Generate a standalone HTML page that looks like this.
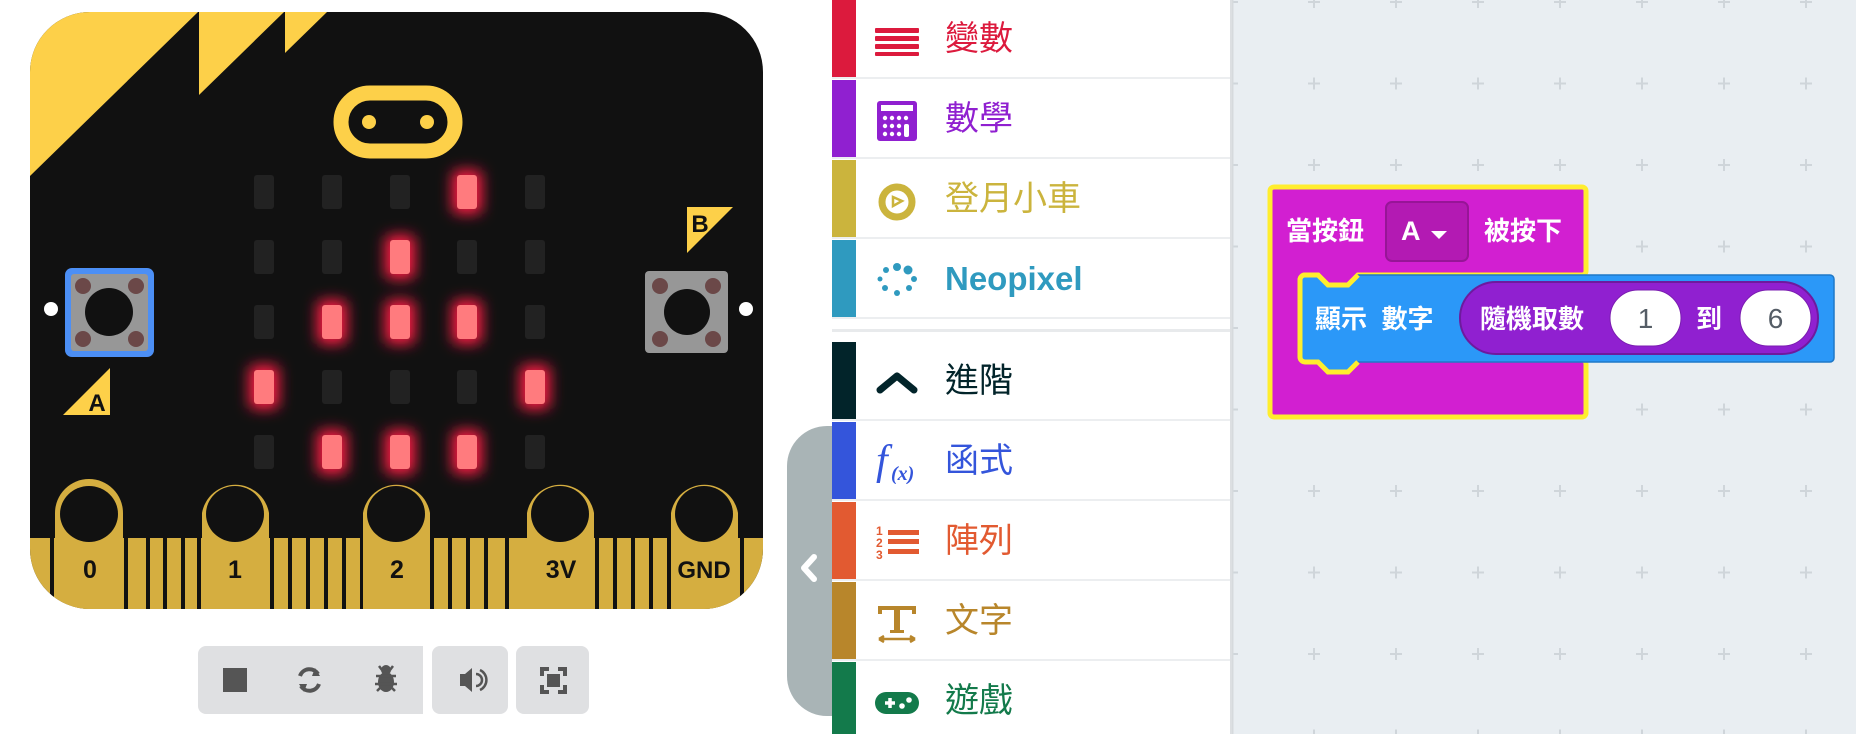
<!DOCTYPE html>
<html><head><meta charset="utf-8"><style>
body{margin:0;width:1856px;height:734px;overflow:hidden;background:#fff;font-family:"Liberation Sans","Noto Sans CJK TC",sans-serif;position:relative}
.abs{position:absolute}
.row{position:absolute;left:832px;width:398px;height:79px;border-bottom:2px solid #eceef0;box-sizing:border-box}
.row .c{position:absolute;left:0;top:0;width:24px;height:100%}
.row .ic{position:absolute;left:43px;top:18px;width:44px;height:44px}
.row .t{position:absolute;left:113px;top:17px;font-size:34px;line-height:44px;font-family:"Liberation Sans","Noto Sans CJK TC",sans-serif}
.bt{color:#fff;font-weight:bold;font-size:26px;font-family:"Liberation Sans","Noto Sans CJK TC",sans-serif;position:absolute;line-height:30px}
.grp{position:absolute;top:646px;height:68px;background:#dfe0e2;border-radius:8px}
</style></head><body>

<svg class="abs" style="left:1232px;top:0" width="624" height="734">
<rect width="624" height="734" fill="#e9eef2"/>
<defs><pattern id="g" x="0" y="0" width="82" height="81.5" patternUnits="userSpaceOnUse" patternTransform="translate(-7,-5)">
<path d="M1 7H13M7 1V13" stroke="#cfd5da" stroke-width="2"/></pattern></defs>
<rect x="0" y="0" width="624" height="734" fill="url(#g)"/>
<line x1="0.5" y1="0" x2="0.5" y2="734" stroke="#d6dadd" stroke-width="2"/>
</svg>

<svg class="abs" style="left:1260px;top:175px" width="590" height="260">
<path d="M14 12 H322 a4 4 0 0 1 4 4 V96 a4 4 0 0 1 -4 4 H98 l-10 10 H68 l-10 -10 H45 a5 5 0 0 0 -5 5 V180 a5 5 0 0 0 5 5 H58 l10 10 H88 l10 -10 H322 a4 4 0 0 1 4 4 V238 a4 4 0 0 1 -4 4 H14 a4 4 0 0 1 -4 -4 V16 a4 4 0 0 1 4 -4Z" fill="#d21fd1" stroke="#ffed2e" stroke-width="5"/>
<rect x="126" y="27" width="82" height="59" rx="6" fill="#b31ab3" stroke="#971597" stroke-width="2"/>
<path d="M171 56 h16 l-8 8z" fill="#fff"/>
<path d="M45 100 H58 l10 10 H88 l10 -10 H570 a4 4 0 0 1 4 4 V183 a4 4 0 0 1 -4 4 H98 l-10 10 H68 l-10 -10 H45 a5 5 0 0 1 -5 -5 V105 a5 5 0 0 1 5 -5Z" fill="#2b98f8" stroke="#1f78c8" stroke-width="1.5"/>
<path d="M45 100 H58 l10 10 H88 l10 -10 M98 187 l-10 10 H68 l-10 -10 H45 a5 5 0 0 1 -5 -5 V105 a5 5 0 0 1 5 -5" fill="none" stroke="#ffed2e" stroke-width="5"/>
<rect x="200" y="107" width="358" height="72" rx="36" fill="#9020d0" stroke="#6e1a9e" stroke-width="2"/>
<rect x="350" y="115" width="71" height="56" rx="28" fill="#fff" stroke="#7a1cb0" stroke-width="1"/>
<rect x="480" y="115" width="71" height="56" rx="28" fill="#fff" stroke="#7a1cb0" stroke-width="1"/>
</svg>
<div class="bt" style="left:1286px;top:216px">當按鈕</div>
<div class="bt" style="left:1401px;top:216px;font-size:27px">A</div>
<div class="bt" style="left:1484px;top:216px">被按下</div>
<div class="bt" style="left:1315px;top:304px">顯示&nbsp;&nbsp;數字</div>
<div class="bt" style="left:1480px;top:304px">隨機取數</div>
<div class="bt" style="left:1696px;top:304px">到</div>
<div class="abs" style="left:1610px;top:304px;width:71px;text-align:center;font-size:28px;color:#555d66;line-height:30px">1</div>
<div class="abs" style="left:1740px;top:304px;width:71px;text-align:center;font-size:28px;color:#555d66;line-height:30px">6</div>

<div class="abs" style="left:832px;top:0;width:398px;height:734px;background:#fff;border-right:2px solid #dcdfe2"></div>
<div class="abs" style="left:832px;top:329px;width:398px;height:3px;background:#e8eaec"></div>

<div class="row" style="top:0"><div class="c" style="background:#dc1a3d"></div>
<svg class="ic" viewBox="0 0 44 44"><g fill="#dc1a3d"><rect x="0" y="10" width="44" height="5" rx="1"/><rect x="0" y="18" width="44" height="5" rx="1"/><rect x="0" y="26" width="44" height="5" rx="1"/><rect x="0" y="34" width="44" height="4" rx="1"/></g></svg>
<div class="t" style="color:#dc1a3d">變數</div></div>

<div class="row" style="top:80px"><div class="c" style="background:#9020d0"></div>
<svg class="ic" viewBox="0 0 44 44"><rect x="2" y="3" width="40" height="40" rx="3" fill="#9020d0"/><rect x="6" y="7" width="32" height="6" fill="#fff"/><g fill="#fff"><circle cx="10" cy="20" r="2.2"/><circle cx="17" cy="20" r="2.2"/><circle cx="24" cy="20" r="2.2"/><circle cx="31" cy="20" r="2.2"/><circle cx="10" cy="28" r="2.2"/><circle cx="17" cy="28" r="2.2"/><circle cx="24" cy="28" r="2.2"/><circle cx="10" cy="36" r="2.2"/><circle cx="17" cy="36" r="2.2"/><circle cx="24" cy="36" r="2.2"/><rect x="29" y="26" width="5" height="13" rx="2"/></g></svg>
<div class="t" style="color:#9020d0">數學</div></div>

<div class="row" style="top:160px"><div class="c" style="background:#cbb43d"></div>
<svg class="ic" viewBox="0 0 44 44"><circle cx="22" cy="24" r="15" fill="none" stroke="#cbb43d" stroke-width="7"/><path d="M18 19 l9 4 -9 5z" fill="none" stroke="#cbb43d" stroke-width="2.5"/></svg>
<div class="t" style="color:#cbb43d">登月小車</div></div>

<div class="row" style="top:240px"><div class="c" style="background:#2f9abf"></div>
<svg class="ic" viewBox="0 0 44 44" fill="#2f9abf"><circle cx="22" cy="9" r="4"/><circle cx="33" cy="12" r="4.5"/><circle cx="39" cy="21" r="3"/><circle cx="34" cy="30" r="3"/><circle cx="22" cy="35" r="3"/><circle cx="10" cy="30" r="3"/><circle cx="5" cy="21" r="2.5"/><circle cx="11" cy="12" r="3"/></svg>
<div class="t" style="color:#2f9abf;font-weight:bold;font-size:33px">Neopixel</div></div>

<div class="row" style="top:342px"><div class="c" style="background:#02242a"></div>
<svg class="ic" viewBox="0 0 44 44"><path d="M5 30 L22 16 L39 30" fill="none" stroke="#02242a" stroke-width="7" stroke-linecap="round" stroke-linejoin="round"/></svg>
<div class="t" style="color:#02242a">進階</div></div>

<div class="row" style="top:422px"><div class="c" style="background:#3455db"></div>
<svg class="ic" viewBox="0 0 44 44"><text x="1" y="34" font-family="Liberation Serif,serif" font-style="italic" font-size="42" fill="#3455db">f</text><text x="16" y="40" font-family="Liberation Serif,serif" font-style="italic" font-weight="bold" font-size="20" fill="#3455db">(x)</text></svg>
<div class="t" style="color:#3455db">函式</div></div>

<div class="row" style="top:502px"><div class="c" style="background:#e25a31"></div>
<svg class="ic" viewBox="0 0 44 44"><g fill="#e25a31"><rect x="13" y="10" width="31" height="5"/><rect x="13" y="19" width="31" height="5"/><rect x="13" y="29" width="31" height="5"/></g><text x="1" y="15" font-size="12" font-weight="bold" fill="#e25a31" font-family="Liberation Sans">1</text><text x="1" y="27" font-size="12" font-weight="bold" fill="#e25a31" font-family="Liberation Sans">2</text><text x="1" y="39" font-size="12" font-weight="bold" fill="#e25a31" font-family="Liberation Sans">3</text></svg>
<div class="t" style="color:#e25a31">陣列</div></div>

<div class="row" style="top:582px"><div class="c" style="background:#b8862b"></div>
<svg class="ic" viewBox="0 0 44 44"><path d="M3 6 H41 V14 H37 V10 H25 V30 H29 V33 H15 V30 H19 V10 H7 V14 H3Z" fill="#b8862b"/><path d="M4 39 H40 M4 39 l5 -3 M4 39 l5 3 M40 39 l-5 -3 M40 39 l-5 3" stroke="#b8862b" stroke-width="2.5" fill="none"/></svg>
<div class="t" style="color:#b8862b">文字</div></div>

<div class="row" style="top:662px;height:72px;border-bottom:0"><div class="c" style="background:#137a4b"></div>
<svg class="ic" viewBox="0 0 44 44"><rect x="0" y="12" width="44" height="22" rx="11" fill="#137a4b"/><path d="M10 23 H20 M15 18 V28" stroke="#fff" stroke-width="3.5"/><circle cx="27" cy="26" r="2.8" fill="#fff"/><circle cx="34" cy="20" r="2.8" fill="#fff"/></svg>
<div class="t" style="color:#137a4b">遊戲</div></div>

<div class="abs" style="left:787px;top:426px;width:45px;height:290px;background:#a9b4b6;border-radius:40px 0 0 40px"></div>
<svg class="abs" style="left:797px;top:553px" width="24" height="30"><path d="M17 4 L7 15 L17 26" stroke="#fff" stroke-width="6" fill="none" stroke-linecap="round" stroke-linejoin="round"/></svg>

<svg class="abs" style="left:0;top:0" width="780" height="734">
<defs>
<clipPath id="bc"><rect x="30" y="12" width="733" height="597" rx="60"/></clipPath>
<filter id="glow" x="-100%" y="-100%" width="300%" height="300%"><feGaussianBlur stdDeviation="7"/></filter>
</defs>
<g clip-path="url(#bc)">
<rect x="30" y="12" width="733" height="597" fill="#111"/>
<path d="M30 12 H198 L30 176Z" fill="#fdd049"/>
<path d="M199 12 H284 L199 95Z" fill="#fdd049"/>
<path d="M285 12 H327 L285 53Z" fill="#fdd049"/>
<rect x="30" y="538" width="733" height="72" fill="#d5ae40"/>
<g fill="#111">
<rect x="50" y="538" width="4" height="72"/><rect x="124" y="538" width="4" height="72"/><rect x="146" y="538" width="4" height="72"/><rect x="163" y="538" width="4" height="72"/><rect x="181" y="538" width="4" height="72"/>
<rect x="197" y="538" width="4" height="72"/><rect x="270" y="538" width="4" height="72"/><rect x="288" y="538" width="4" height="72"/><rect x="306" y="538" width="4" height="72"/><rect x="324" y="538" width="4" height="72"/><rect x="342" y="538" width="4" height="72"/><rect x="360" y="538" width="4" height="72"/>
<rect x="430" y="538" width="4" height="72"/><rect x="448" y="538" width="4" height="72"/><rect x="466" y="538" width="4" height="72"/><rect x="484" y="538" width="4" height="72"/><rect x="505" y="538" width="4" height="72"/>
<rect x="595" y="538" width="4" height="72"/><rect x="613" y="538" width="4" height="72"/><rect x="631" y="538" width="4" height="72"/><rect x="649" y="538" width="4" height="72"/><rect x="667" y="538" width="4" height="72"/><rect x="740" y="538" width="4" height="72"/>
</g>
<g fill="#d5ae40">
<path d="M55 610 V513 a34 34 0 0 1 68 0 V610Z"/>
<path d="M202 610 V513 a34 34 0 0 1 67 0 V610Z"/>
<path d="M363 610 V513 a34 34 0 0 1 67 0 V610Z"/>
<path d="M527 610 V513 a34 34 0 0 1 67 0 V610Z"/>
<path d="M671 610 V513 a34 34 0 0 1 67 0 V610Z"/>
</g>
<g fill="#111">
<ellipse cx="89" cy="514" rx="29" ry="28"/><ellipse cx="235" cy="514" rx="29" ry="28"/><ellipse cx="396" cy="514" rx="29" ry="28"/><ellipse cx="560" cy="514" rx="29" ry="28"/><ellipse cx="704" cy="514" rx="29" ry="28"/>
</g>
<g font-family="Liberation Sans" font-weight="bold" font-size="25" fill="#111" text-anchor="middle">
<text x="90" y="578">0</text><text x="235" y="578">1</text><text x="397" y="578">2</text><text x="561" y="578">3V</text><text x="704" y="578" font-size="24">GND</text>
</g>
</g>
<rect x="341" y="93" width="114" height="58" rx="29" fill="none" stroke="#fdd049" stroke-width="15"/>
<circle cx="369" cy="122" r="7" fill="#fdd049"/><circle cx="427" cy="122" r="7" fill="#fdd049"/>
<g fill="#222">
<rect x="254" y="175" width="20" height="34" rx="3"/><rect x="322" y="175" width="20" height="34" rx="3"/><rect x="390" y="175" width="20" height="34" rx="3"/><rect x="525" y="175" width="20" height="34" rx="3"/>
<rect x="254" y="240" width="20" height="34" rx="3"/><rect x="322" y="240" width="20" height="34" rx="3"/><rect x="457" y="240" width="20" height="34" rx="3"/><rect x="525" y="240" width="20" height="34" rx="3"/>
<rect x="254" y="305" width="20" height="34" rx="3"/><rect x="525" y="305" width="20" height="34" rx="3"/>
<rect x="322" y="370" width="20" height="34" rx="3"/><rect x="390" y="370" width="20" height="34" rx="3"/><rect x="457" y="370" width="20" height="34" rx="3"/>
<rect x="254" y="435" width="20" height="34" rx="3"/><rect x="525" y="435" width="20" height="34" rx="3"/>
</g>
<g fill="#ff1a45" filter="url(#glow)">
<rect x="452" y="170" width="30" height="44" rx="6"/><rect x="385" y="235" width="30" height="44" rx="6"/>
<rect x="317" y="300" width="30" height="44" rx="6"/><rect x="385" y="300" width="30" height="44" rx="6"/><rect x="452" y="300" width="30" height="44" rx="6"/>
<rect x="249" y="365" width="30" height="44" rx="6"/><rect x="520" y="365" width="30" height="44" rx="6"/>
<rect x="317" y="430" width="30" height="44" rx="6"/><rect x="385" y="430" width="30" height="44" rx="6"/><rect x="452" y="430" width="30" height="44" rx="6"/>
</g>
<g fill="#ff7b7e">
<rect x="457" y="175" width="20" height="34" rx="3"/><rect x="390" y="240" width="20" height="34" rx="3"/>
<rect x="322" y="305" width="20" height="34" rx="3"/><rect x="390" y="305" width="20" height="34" rx="3"/><rect x="457" y="305" width="20" height="34" rx="3"/>
<rect x="254" y="370" width="20" height="34" rx="3"/><rect x="525" y="370" width="20" height="34" rx="3"/>
<rect x="322" y="435" width="20" height="34" rx="3"/><rect x="390" y="435" width="20" height="34" rx="3"/><rect x="457" y="435" width="20" height="34" rx="3"/>
</g>
<rect x="65" y="268" width="89" height="89" rx="7" fill="#4c8ff5"/>
<rect x="71" y="274" width="77" height="77" rx="3" fill="#979797"/>
<circle cx="109" cy="312" r="24" fill="#111"/>
<g fill="#6b4848"><circle cx="83" cy="286" r="8"/><circle cx="136" cy="286" r="8"/><circle cx="83" cy="339" r="8"/><circle cx="136" cy="339" r="8"/></g>
<rect x="645" y="271" width="83" height="82" rx="4" fill="#979797"/>
<circle cx="687" cy="312" r="23" fill="#111"/>
<g fill="#6b4848"><circle cx="660" cy="286" r="8"/><circle cx="713" cy="286" r="8"/><circle cx="660" cy="339" r="8"/><circle cx="713" cy="339" r="8"/></g>
<circle cx="51" cy="309" r="7" fill="#fff"/><circle cx="746" cy="309" r="7" fill="#fff"/>
<path d="M63 415 L110 368 V415Z" fill="#fdd049"/>
<text x="97" y="411" font-family="Liberation Sans" font-weight="bold" font-size="24" fill="#111" text-anchor="middle">A</text>
<path d="M687 207 H733 L687 253Z" fill="#fdd049"/>
<text x="700" y="232" font-family="Liberation Sans" font-weight="bold" font-size="24" fill="#111" text-anchor="middle">B</text>
</svg>

<div class="grp" style="left:198px;width:225px;border-radius:8px 0 0 8px"></div>
<div class="grp" style="left:432px;width:76px"></div>
<div class="grp" style="left:516px;width:73px"></div>
<svg class="abs" style="left:198px;top:646px" width="400" height="68">
<rect x="25" y="22" width="24" height="24" fill="#555"/>
<g fill="none" stroke="#555" stroke-width="4"><path d="M102 30 a10 10 0 0 1 18 -2"/><path d="M121 38 a10 10 0 0 1 -18 2"/></g>
<path d="M117 22 l5 8 -8 0z M106 46 l-5 -8 8 0z" fill="#555"/>
<g fill="#555"><ellipse cx="188" cy="36" rx="8" ry="10"/><circle cx="188" cy="24" r="5"/><path d="M178 30 h20 M177 38 h22 M179 45 l3 -3 M197 45 l-3 -3 M181 20 l3 4 M195 20 l-3 4" stroke="#555" stroke-width="2.5"/></g>
<path d="M262 28 h5 l7 -6 v24 l-7 -6 h-5z" fill="#555"/>
<path d="M278 28 a6 6 0 0 1 0 12 M282 24 a11 11 0 0 1 0 20" stroke="#555" stroke-width="2.5" fill="none"/>
<g fill="none" stroke="#555" stroke-width="4"><path d="M344 30 v-7 h7 M360 23 h7 v7 M367 39 v7 h-7 M351 46 h-7 v-7"/></g>
<rect x="349" y="28" width="13" height="13" fill="#555"/>
</svg>

</body></html>
